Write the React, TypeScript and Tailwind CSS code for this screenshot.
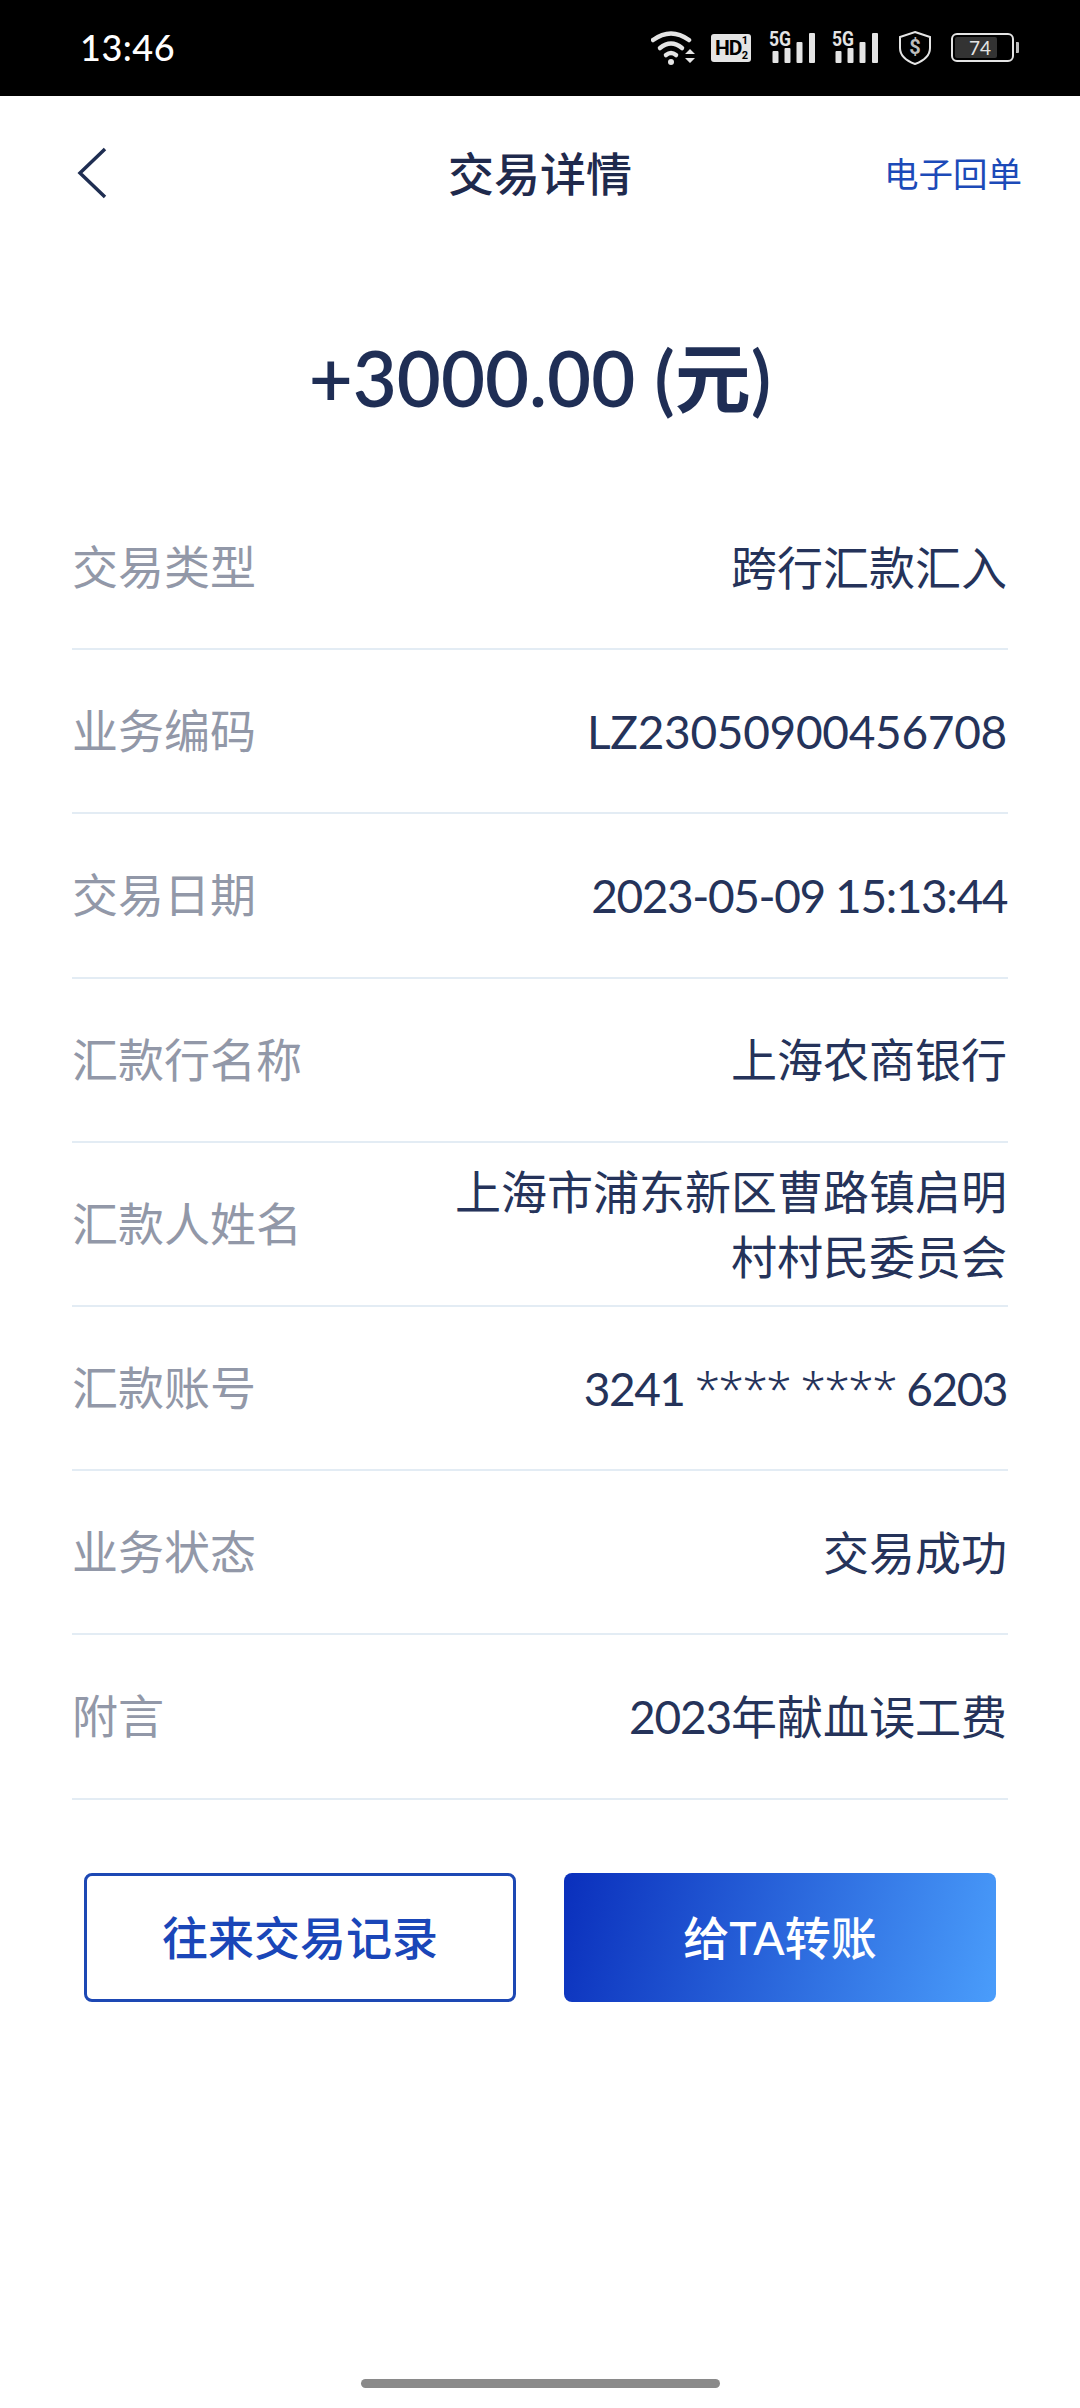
import type { ReactNode } from "react";

const cjk = "font-['Lato','Noto_Sans_CJK_SC',sans-serif]";

const rows: { label: string; value: ReactNode[]; tracking?: string }[] = [
  { label: "交易类型", value: ["跨行汇款汇入"] },
  { label: "业务编码", value: ["LZ23050900456708"], tracking: "tracking-[-0.3px]" },
  { label: "交易日期", value: ["2023-05-09 15:13:44"], tracking: "tracking-[-1.4px]" },
  { label: "汇款行名称", value: ["上海农商银行"] },
  { label: "汇款人姓名", value: ["上海市浦东新区曹路镇启明", "村村民委员会"] },
  {
    label: "汇款账号",
    value: [
      <>
        3241 <span className="font-['Noto_Sans',sans-serif] font-light">**** ****</span> 6203
      </>,
    ],
    tracking: "tracking-[-1.5px]",
  },
  { label: "业务状态", value: ["交易成功"] },
  {
    label: "附言",
    value: [
      <>
        <span className="tracking-[-1.2px]">2023</span>年献血误工费
      </>,
    ],
  },
];

function Signal() {
  return (
    <svg width="48" height="46" viewBox="0 -6 48 46" className="text-[#e4e4e4]">
      <text x="0" y="15" fontSize="19.5" fontWeight="700" fill="currentColor" fontFamily="Roboto, sans-serif" textLength="22" lengthAdjust="spacingAndGlyphs">5G</text>
      <rect x="3.5" y="20" width="6" height="12" rx="1" fill="currentColor" />
      <rect x="15.5" y="17" width="6" height="15" rx="1" fill="currentColor" />
      <rect x="27.5" y="11" width="6" height="21" rx="1" fill="currentColor" />
      <rect x="40" y="2" width="6" height="30" rx="1" fill="currentColor" />
    </svg>
  );
}

function StatusBar() {
  return (
    <div className="h-[96px] bg-black flex items-center justify-between pl-[80px] pr-[61px]">
      <span className="font-['Lato',sans-serif] text-[36px] font-medium tracking-[0.5px] text-white leading-none pb-[2px]">13:46</span>
      <div className="flex items-center text-[#e4e4e4] pb-[1px]">
        {/* wifi */}
        <svg width="46" height="36" viewBox="0 0 46 36" className="mr-[14px]">
          <g fill="none" stroke="currentColor" strokeWidth="4.5" strokeLinecap="round">
            <path d="M2 10 Q20 -3 38 10" />
            <path d="M9 18 Q20 9 31 18" />
            <path d="M15 25 Q20 21 25 25" />
          </g>
          <circle cx="20" cy="32" r="3" fill="currentColor" />
          <path d="M34 24 L39 19 L44 24 Z M34 28 L44 28 L39 33 Z" fill="currentColor" />
        </svg>
        {/* HD badge */}
        <div className="relative w-[40px] h-[28px] bg-[#e4e4e4] rounded-[3px] mr-[18px] text-black font-['Roboto',sans-serif] font-bold">
          <span className="absolute left-[4px] top-[3px] text-[21px] leading-[22px] tracking-[-1px]">HD</span>
          <span className="absolute right-[3px] top-[1px] text-[11px] leading-[11px]">1</span>
          <span className="absolute right-[3px] bottom-[1px] text-[11px] leading-[11px]">2</span>
        </div>
        <div className="mr-[15px]"><Signal /></div>
        <Signal />
        {/* shield */}
        <svg width="34" height="36" viewBox="0 0 34 36" className="ml-[18px] mr-[19px]">
          <path d="M17 2 L32 7 V18 C32 26 25 31 17 34 C9 31 2 26 2 18 V7 Z" fill="none" stroke="currentColor" strokeWidth="2" />
          <text x="17" y="24" textAnchor="middle" fontSize="20" fontWeight="700" fill="#bdbdbd" fontFamily="Roboto, sans-serif">$</text>
        </svg>
        {/* battery */}
        <div className="w-[63px] h-[29px] border-2 border-[#e4e4e4] rounded-[6px] p-[2px]">
          <div className="h-full w-[42px] bg-[#333333] rounded-[2px] flex items-center justify-center font-['Lato',sans-serif] text-[19px] leading-none text-[#e4e4e4]">
            <span className="ml-[8px]">74</span>
          </div>
        </div>
        <div className="w-[3px] h-[11px] bg-[#bdbdbd] ml-[2px] rounded-r-[1px]" />
      </div>
    </div>
  );
}

export default function App() {
  return (
    <div className={`w-[1080px] h-[2408px] bg-white relative overflow-hidden ${cjk}`}>
      <StatusBar />

      {/* header */}
      <div className="relative h-[156px] flex items-center justify-center">
        <svg width="30" height="54" viewBox="0 0 30 54" className="absolute left-[77px] top-[50px]">
          <path d="M28 3 L3 27 L28 51" fill="none" stroke="#1f2e52" strokeWidth="3.5" />
        </svg>
        <span className="text-[46px] font-medium text-[#1f2a4d] leading-none">交易详情</span>
        <span className="absolute right-[58px] top-[61px] text-[34.5px] text-[#1c4ab8] leading-none">电子回单</span>
      </div>

      {/* amount */}
      <div className="h-[122px] mt-[65px] flex items-center justify-center text-[76px] font-semibold text-[#1f2e55] leading-none">
        +3000.00 (元)
      </div>

      {/* rows */}
      <div className="mx-[72px] mt-[47px]">
        {rows.map((row) => (
          <div key={row.label} className="h-[164.2px] flex items-center justify-between border-b-2 border-[#e3ecf4]">
            <span className="text-[46px] text-[#9298a8] leading-none">{row.label}</span>
            <div className={`text-right text-[46px] text-[#25335a] leading-[65px] pr-[1px] ${row.tracking ?? ""}`}>
              {row.value.map((line, i) => (
                <div key={i}>{line}</div>
              ))}
            </div>
          </div>
        ))}
      </div>

      {/* buttons */}
      <div className="flex justify-center gap-[48px] mt-[73px]">
        <button className="w-[432px] h-[129px] rounded-[8px] border-[3px] border-[#1d48b4] text-[46px] font-medium text-[#1a46b8] bg-white">
          往来交易记录
        </button>
        <button className="w-[432px] h-[129px] rounded-[8px] bg-[linear-gradient(105deg,#0a2fbc,#4a9dfb)] text-[46px] font-medium text-white">
          给TA转账
        </button>
      </div>

      {/* home indicator */}
      <div className="absolute left-[361px] bottom-[20px] w-[359px] h-[9px] rounded-full bg-[#8a8a8a]" />
    </div>
  );
}
